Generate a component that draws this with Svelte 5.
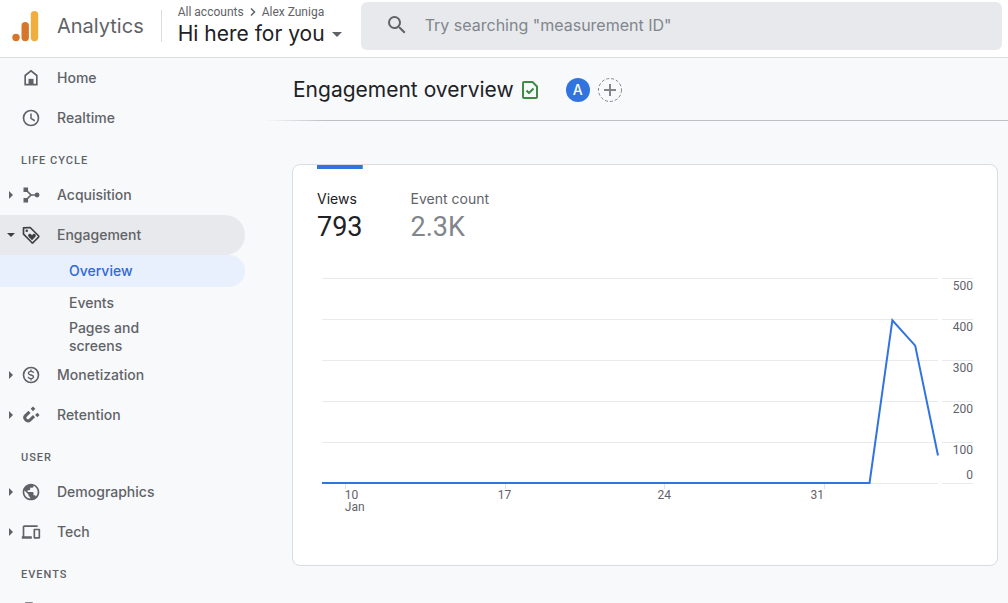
<script>
  const sections = [
    {
      title: '',
      items: [
        { id: 'home', label: 'Home' },
        { id: 'realtime', label: 'Realtime' }
      ]
    },
    {
      title: 'Life cycle',
      items: [
        { id: 'acquisition', label: 'Acquisition', group: true },
        {
          id: 'engagement',
          label: 'Engagement',
          group: true,
          children: ['Overview', 'Events', 'Pages and screens']
        },
        { id: 'monetization', label: 'Monetization', group: true },
        { id: 'retention', label: 'Retention', group: true }
      ]
    },
    {
      title: 'User',
      items: [
        { id: 'demographics', label: 'Demographics', group: true },
        { id: 'tech', label: 'Tech', group: true }
      ]
    },
    { title: 'Events', items: [{ id: 'flag', label: '' }] }
  ];

  const metrics = [
    { label: 'Views', value: '793' },
    { label: 'Event count', value: '2.3K' }
  ];

  // Daily views, one value per day from 9 January
  const views = [...Array(25).fill(0), 397, 335, 67];
  const lastDay = views.length - 1;
  const scaleMax = 500;
  const gridValues = [500, 400, 300, 200, 100];
  const ticks = [
    { day: 1, label: '10', month: 'Jan' },
    { day: 8, label: '17' },
    { day: 15, label: '24' },
    { day: 22, label: '31', end: true }
  ];
  const linePoints = views.map((v, day) => `${day},${scaleMax - v}`).join(' ');

  let open = $state('engagement');
  let page = $state('Overview');
  let metric = $state('Views');
</script>

{#snippet icon(id)}
  <svg class="icon" viewBox="0 0 24 24" aria-hidden="true">
    {#if id === 'home'}
      <path fill="none" stroke="currentColor" stroke-width="2" d="M5 20V9l7-5.500L19 9v11z" />
      <path d="M9 13h6v7H9z" />
    {:else if id === 'realtime'}
      <circle cx="12" cy="12" r="9" fill="none" stroke="currentColor" stroke-width="2" />
      <path fill="none" stroke="currentColor" stroke-width="1.800" d="M12 6.500V12.500L16.500 15.300" />
    {:else if id === 'acquisition'}
      <path d="M3 3h5.500v5.500H3zM3 15.500h5.500V21H3z" />
      <circle cx="19.300" cy="12" r="2.900" />
      <path fill="none" stroke="currentColor" stroke-width="2" d="M6 6l6 6-6 6M12 12h7" />
    {:else if id === 'engagement'}
      <path fill="none" stroke="currentColor" stroke-width="2" stroke-linejoin="round" d="M3 3.500v7.500L13 21q.8.700 1.600 0L21 14.500q.7-.8 0-1.600L11 3z" />
      <circle cx="6.900" cy="7" r="1.500" />
      <path d="M13.200 18.300l-4.100-4.200c-1.700-2 .9-4.700 2.900-3l1.200 1.200 1.200-1.200c2-1.700 4.600 1 2.900 3z" />
    {:else if id === 'monetization'}
      <circle cx="12" cy="12" r="9" fill="none" stroke="currentColor" stroke-width="2" />
      <path fill="none" stroke="currentColor" stroke-width="1.700" d="M12 5.500v2M12 16.500v2M15.200 9.500C14.800 8.100 13.500 7.600 12 7.600c-3.800 0-4.200 3.200-1.100 4.100l2 .6c3.200.9 2.700 4.100-.9 4.100-1.700 0-3-.7-3.400-2.200" />
    {:else if id === 'retention'}
      <path fill="none" stroke="currentColor" stroke-width="3.600" d="M10.200 8.200L5.800 12.500C2.200 16 7.200 21.200 11 17.800L15.600 13.400" />
      <path d="M14.400 1.800l2.800 2.800-2.800 2.800-2.800-2.800zM19.600 9.200l2.700 2.700-2.700 2.700-2.700-2.700z" />
    {:else if id === 'demographics'}
      <path d="M12 2C6.480 2 2 6.480 2 12s4.480 10 10 10 10-4.480 10-10S17.520 2 12 2zm-1 17.930c-3.950-.49-7-3.850-7-7.930 0-.62.080-1.210.21-1.790L9 15v1c0 1.100.9 2 2 2v1.930zm6.900-2.540c-.26-.81-1-1.390-1.900-1.390h-1v-3c0-.55-.45-1-1-1H8v-2h2c.55 0 1-.45 1-1V7h2c1.100 0 2-.9 2-2v-.41c2.930 1.190 5 4.060 5 7.410 0 2.080-.8 3.970-2.100 5.390z" />
    {:else if id === 'tech'}
      <path d="M4 6h16V4H4c-1.100 0-2 .9-2 2v11H1v3h12v-3H4V6zm18 2h-6c-.55 0-1 .45-1 1v10c0 .55.45 1 1 1h6c.55 0 1-.45 1-1V9c0-.55-.45-1-1-1zm-1 10h-4v-8h4v8z" />
    {:else}
      <path d="M14.400 6L14 4H5v17h2v-7h5.600l.4 2h7V6z" />
    {/if}
  </svg>
{/snippet}

<div class="shell">
  <header class="topbar">
    <a class="brand" href="#home">
      <svg class="logo" viewBox="0 0 28 32" aria-hidden="true">
        <circle cx="4" cy="27.500" r="3.700" fill="#d5762b" />
        <rect x="9.500" y="12" width="7.400" height="19.200" rx="3.700" fill="#d5762b" />
        <rect x="18.800" y="1" width="7.400" height="30.200" rx="3.700" fill="#f0ae3c" />
      </svg>
      <span>Analytics</span>
    </a>
    <div class="account">
      <div class="crumbs">
        <span>All accounts</span>
        <svg viewBox="0 0 6 8" aria-hidden="true"><path d="M1 .5L4.500 4 1 7.500" /></svg>
        <span>Alex Zuniga</span>
      </div>
      <button class="property" type="button">
        Hi here for you
        <svg viewBox="0 0 10 5" aria-hidden="true"><path d="M0 0h10L5 5z" /></svg>
      </button>
    </div>
    <label class="search">
      <svg viewBox="0 0 24 24" role="img" aria-label="Search">
        <path d="M15.500 14h-.79l-.28-.27A6.470 6.470 0 0 0 16 9.500 6.500 6.500 0 1 0 9.500 16c1.610 0 3.090-.59 4.230-1.570l.27.28v.79l5 4.990L20.490 19l-4.990-5zm-6 0C7.010 14 5 11.990 5 9.500S7.010 5 9.500 5 14 7.010 14 9.500 11.990 14 9.500 14z" />
      </svg>
      <input type="text" placeholder={'Try searching "measurement ID"'} />
    </label>
  </header>

  <div class="body">
    <nav class="sidebar">
      {#each sections as section}
        {#if section.title}<h2>{section.title}</h2>{/if}
        {#each section.items as item}
          <button
            type="button"
            class="nav-item"
            class:open={open === item.id}
            aria-expanded={item.group ? open === item.id : undefined}
            onclick={() => item.group && (open = open === item.id ? '' : item.id)}
          >
            <svg class="arrow" viewBox="0 0 8 8" aria-hidden="true">
              {#if item.group && open === item.id}
                <path d="M0 2h8L4 6z" />
              {:else if item.group}
                <path d="M2 0v8l4-4z" />
              {/if}
            </svg>
            {@render icon(item.id)}
            <span>{item.label}</span>
          </button>
          {#if item.children && open === item.id}
            {#each item.children as child}
              <a
                class="sub-item"
                class:current={page === child}
                href="#{child}"
                onclick={() => (page = child)}><span>{child}</span></a
              >
            {/each}
          {/if}
        {/each}
      {/each}
    </nav>

    <main>
      <div class="page-head">
        <h1>Engagement overview</h1>
        <svg class="status" viewBox="0 0 16 18" role="img" aria-label="Data quality">
          <path d="M1 2q0-1 1-1h8.500L15 5.500V16q0 1-1 1H2q-1 0-1-1z" />
          <path d="M4.500 9.500L7 12l4.500-4.500" />
        </svg>
        <button class="avatar" type="button" aria-label="All users">A</button>
        <button class="add" type="button" aria-label="Add comparison">
          <svg viewBox="0 0 24 24" aria-hidden="true">
            <circle cx="12" cy="12" r="11.500" />
            <path d="M12 6v12M6 12h12" />
          </svg>
        </button>
      </div>

      <section class="card">
        <div class="metrics">
          {#each metrics as m}
            <button
              type="button"
              class="metric"
              class:selected={metric === m.label}
              onclick={() => (metric = m.label)}
            >
              <span class="name">{m.label}</span>
              <span class="value">{m.value}</span>
            </button>
          {/each}
        </div>

        <div class="chart">
          <svg class="plot" viewBox="0 0 {lastDay} {scaleMax}" preserveAspectRatio="none" role="img" aria-label="Views per day">
            {#each [...gridValues, 0] as v}
              <line class="grid" x1="0" x2={lastDay} y1={scaleMax - v} y2={scaleMax - v} />
            {/each}
            <polyline class="series" points={linePoints} />
          </svg>
          <div class="scale">
            {#each gridValues as v, i}
              <div>
                <span>{v}</span>
                {#if i === gridValues.length - 1}<span>0</span>{/if}
              </div>
            {/each}
          </div>
          <div class="days" style="grid-template-columns: repeat({lastDay}, minmax(0, 1fr))">
            {#each ticks as t}
              <i style="grid-column: {t.day + 1}"></i>
              <span
                class:first={t.month}
                class:end={t.end}
                style="grid-column: {t.month ? t.day + 1 : t.end ? t.day - 1 : t.day} / span 2"
              >
                {t.label}{#if t.month}<br />{t.month}{/if}
              </span>
            {/each}
          </div>
        </div>
      </section>
    </main>
  </div>
</div>

<style>
  :global(body) {
    margin: 0;
    overflow: hidden;
  }
  .shell {
    display: flex;
    flex-direction: column;
    height: 100vh;
    background: #f8f9fb;
    color: #5f6368;
    font-family: Inter, Roboto, sans-serif;
  }
  button {
    padding: 0;
    border: 0;
    background: none;
    color: inherit;
    font: inherit;
    text-align: left;
    cursor: pointer;
  }
  a {
    color: inherit;
    text-decoration: none;
  }
  svg {
    display: block;
    flex: none;
    fill: currentColor;
  }

  .topbar {
    display: flex;
    flex: none;
    box-sizing: border-box;
    height: 58px;
    border-bottom: 1px solid #dadce0;
    background: #fff;
  }
  .brand {
    display: flex;
    align-items: center;
    gap: 17px;
    height: 32px;
    margin: 10px 17px 0 12px;
    font-size: 20px;
  }
  .logo {
    width: 28px;
    height: 32px;
  }
  .account {
    height: 32px;
    margin-top: 10px;
    padding: 0 19px 0 16px;
    border-left: 1px solid #dadce0;
  }
  .crumbs {
    display: flex;
    align-items: center;
    gap: 6px;
    margin-top: -6px;
    font: 12px/16px Roboto, sans-serif;
    white-space: nowrap;
  }
  .crumbs svg {
    width: 6px;
    height: 8px;
    fill: none;
    stroke: currentColor;
    stroke-width: 1.500;
  }
  .property {
    display: flex;
    align-items: center;
    gap: 7px;
    color: #202124;
    font-size: 21px;
    line-height: 28px;
    white-space: nowrap;
  }
  .property svg {
    width: 10px;
    height: 5px;
    fill: #5f6368;
  }
  .search {
    display: flex;
    flex: 1;
    align-items: center;
    gap: 16px;
    box-sizing: border-box;
    height: 48px;
    margin: 2px 6px 0 0;
    padding: 0 0 2px 24px;
    border-radius: 6px;
    background: #e8e9ed;
  }
  .search svg {
    width: 24px;
    height: 24px;
  }
  .search input {
    flex: 1;
    min-width: 0;
    padding: 0;
    border: 0;
    outline: 0;
    background: none;
    color: #202124;
    font: 16px/24px Inter, sans-serif;
  }
  .search input::placeholder {
    color: #80868b;
    opacity: 1;
  }

  .body {
    display: flex;
    flex: 1;
    min-height: 0;
  }
  .sidebar {
    flex: none;
    width: 245px;
    overflow: hidden;
    font-size: 14px;
    font-weight: 500;
  }
  .sidebar h2 {
    margin: 0;
    padding: 15px 21px 6px;
    font: 500 11px/16px Roboto, sans-serif;
    letter-spacing: 1px;
    text-transform: uppercase;
  }
  .nav-item {
    display: flex;
    align-items: center;
    width: 100%;
    height: 40px;
    padding-left: 7px;
    border-radius: 0 20px 20px 0;
    line-height: 18px;
  }
  .nav-item.open {
    background: #e8e9ec;
  }
  .nav-item.open svg {
    color: #3c4043;
  }
  .arrow {
    width: 8px;
    height: 8px;
    margin-right: 6px;
  }
  .icon {
    width: 20px;
    height: 20px;
    margin-right: 16px;
  }
  .sub-item {
    display: flex;
    align-items: center;
    min-height: 32px;
    padding-left: 69px;
    border-radius: 0 16px 16px 0;
    line-height: 18px;
  }
  .sub-item span {
    max-width: 100px;
  }
  .sub-item.current {
    background: #e8f0fe;
    color: #2f69d2;
  }

  main {
    flex: 1;
    min-width: 0;
    margin-left: 20px;
  }
  .page-head {
    display: flex;
    align-items: center;
    box-sizing: border-box;
    height: 63px;
    padding-left: 28px;
    background: linear-gradient(to right, transparent, #bdc1c6 60px) bottom / 100% 1px no-repeat;
  }
  h1 {
    margin: 0;
    color: #202124;
    font-size: 21px;
    font-weight: 400;
    line-height: 28px;
  }
  .status {
    width: 16px;
    height: 18px;
    margin: 0 28px 0 8px;
    fill: none;
    stroke: #3d8b44;
    stroke-width: 2;
    stroke-linejoin: round;
  }
  .avatar {
    width: 24px;
    height: 24px;
    margin-right: 8px;
    border-radius: 50%;
    background: #3174e0;
    color: #fff;
    font-size: 14px;
    font-weight: 500;
    line-height: 24px;
    text-align: center;
  }
  .add svg {
    width: 24px;
    height: 24px;
    fill: none;
    stroke: #80868b;
  }
  .add circle {
    stroke-dasharray: 3 2;
  }
  .add path {
    stroke-width: 2;
  }

  .card {
    margin: 43px 10px 0 27px;
    padding: 0 24px 52px;
    border: 1px solid #dadce0;
    border-radius: 8px;
    background: #fff;
  }
  .metrics {
    display: flex;
    gap: 48px;
  }
  .metric {
    display: flex;
    flex-direction: column;
    padding-top: 20px;
    border-top: 4px solid transparent;
  }
  .metric.selected {
    background: linear-gradient(#3174e0, #3174e0) top / 100% 4px no-repeat border-box;
  }
  .metric .name {
    font-size: 14px;
    line-height: 20px;
  }
  .metric .value {
    color: #80868b;
    font: 27px/36px Roboto, sans-serif;
  }
  .selected .name {
    color: #202124;
  }
  .selected .value {
    color: #202124;
  }

  .chart {
    display: grid;
    grid-template-columns: minmax(0, 1fr) 31px;
    column-gap: 4px;
    margin-top: 33px;
    padding-left: 5px;
    color: #5f6368;
    font: 12px/12px Roboto, sans-serif;
  }
  .plot {
    width: 100%;
    height: 205px;
    overflow: visible;
  }
  .grid {
    stroke: #e8eaed;
    vector-effect: non-scaling-stroke;
    shape-rendering: crispEdges;
  }
  .series {
    fill: none;
    stroke: #3174e0;
    stroke-width: 2;
    vector-effect: non-scaling-stroke;
  }
  .scale {
    border-bottom: 1px solid #e8eaed;
    text-align: right;
  }
  .scale div {
    display: flex;
    flex-direction: column;
    gap: 13px;
    box-sizing: border-box;
    height: 41px;
    padding-top: 1px;
    border-top: 1px solid #e8eaed;
  }
  .days {
    display: grid;
    align-content: start;
    text-align: center;
  }
  .days i {
    grid-row: 1;
    height: 5px;
    border-left: 1px solid #e0e2e5;
  }
  .days span {
    grid-row: 2;
  }
  .days .first {
    text-align: left;
  }
  .days .end {
    text-align: right;
  }
</style>
